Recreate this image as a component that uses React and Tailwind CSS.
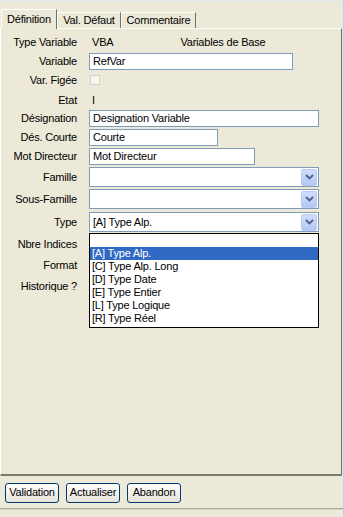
import React from "react";

const Chevron = () => (
  <svg width="9" height="6" viewBox="0 0 9 6">
    <path d="M1 1 L4.5 4.5 L8 1" fill="none" stroke="#4d6185" strokeWidth="1.8" />
  </svg>
);

const Select = ({ value }) => (
  <div className="w-[230px] h-[20px] border border-[#7f9db9] bg-white flex items-center">
    <span className="flex-1 pl-[3px] leading-none">{value}</span>
    <div className="w-[16px] h-[17px] mr-[1px] rounded-[2px] border border-[#bccbf5] bg-gradient-to-b from-[#d0ddfc] to-[#b3c7f6] flex items-center justify-center">
      <Chevron />
    </div>
  </div>
);

const Input = ({ value, w }) => (
  <div className={`${w} h-[17px] border border-[#7f9db9] bg-white flex items-center pl-[3px] leading-none`}>
    {value}
  </div>
);

const Row = ({ label, mt, h, children, extra }) => (
  <div className={`flex items-center ${mt} ${h} relative`}>
    <div className="w-[76px] text-right leading-none whitespace-nowrap">{label}</div>
    <div className="ml-[12px] flex items-center">{children}</div>
    {extra}
  </div>
);

export default function App() {
  const items = [
    "[A] Type Alp.",
    "[C] Type Alp. Long",
    "[D] Type Date",
    "[E] Type Entier",
    "[L] Type Logique",
    "[R] Type Réel",
  ];
  return (
    <div className="w-[344px] h-[517px] bg-[#ece9d8] flex font-['Liberation_Sans',sans-serif] text-[11px] tracking-[-0.2px] text-black overflow-hidden">
      <div className="flex-1 flex flex-col">
        {/* tabs */}
        <div className="h-[28px] flex items-end pl-[1px] border-t border-[#dfe6ef]">
          <div className="relative z-10 w-[56px] h-[20px] mb-[-1px] bg-[#ece9d8] border-t border-l border-white border-r border-r-[#716f64] flex items-center justify-center rounded-tl-[2px]">
            Définition
          </div>
          <div className="w-[64px] h-[16px] bg-[#ece9d8] border-t border-l border-white border-r border-r-[#716f64] flex items-center justify-center">
            Val. Défaut
          </div>
          <div className="w-[75px] h-[16px] bg-[#ece9d8] border-t border-l border-white border-r border-r-[#716f64] flex items-center justify-center">
            Commentaire
          </div>
        </div>
        {/* panel */}
        <div className="w-[342px] h-[448px] border-t border-l border-white border-r border-r-[#716f64] border-b-2 border-b-[#7d7b70] flex flex-col">
          <div className="flex flex-col">
            <Row label="Type Variable" mt="mt-[6px]" h="h-[15px]">
              <span className="ml-[3px] leading-none">VBA</span>
              <span className="ml-[67px] leading-none">Variables de Base</span>
            </Row>
            <Row label="Variable" mt="mt-[3px]" h="h-[17px]">
              <Input value="RefVar" w="w-[204px]" />
            </Row>
            <Row label="Var. Figée" mt="mt-[2px]" h="h-[16px]">
              <div className="ml-[1px] w-[10px] h-[10px] border border-[#d4d2c6] bg-[#f6f5f0]" />
            </Row>
            <Row label="Etat" mt="mt-[4px]" h="h-[16px]">
              <span className="ml-[3px] leading-none">I</span>
            </Row>
            <Row label="Désignation" mt="mt-[2px]" h="h-[17px]">
              <Input value="Designation Variable" w="w-[230px]" />
            </Row>
            <Row label="Dés. Courte" mt="mt-[2px]" h="h-[17px]">
              <Input value="Courte" w="w-[129px]" />
            </Row>
            <Row label="Mot Directeur" mt="mt-[2px]" h="h-[17px]">
              <Input value="Mot Directeur" w="w-[166px]" />
            </Row>
            <Row label="Famille" mt="mt-[2px]" h="h-[20px]">
              <Select value="" />
            </Row>
            <Row label="Sous-Famille" mt="mt-[2px]" h="h-[20px]">
              <Select value="" />
            </Row>
            <Row
              label="Type"
              mt="mt-[3px]"
              h="h-[20px]"
              extra={
                <div className="absolute z-20 left-[88px] top-[21px] w-[230px] h-[95px] border border-black bg-white flex flex-col">
                  <div className="h-[13px]" />
                  {items.map((t, i) => (
                    <div
                      key={t}
                      className={`h-[13px] pl-[2px] flex items-center leading-none ${
                        i === 0 ? "bg-[#316ac5] text-white" : ""
                      }`}
                    >
                      {t}
                    </div>
                  ))}
                </div>
              }
            >
              <Select value="[A] Type Alp." />
            </Row>
            <Row label="Nbre Indices" mt="mt-[4px]" h="h-[16px]" />
            <Row label="Format" mt="mt-[5px]" h="h-[16px]" />
            <Row label="Historique ?" mt="mt-[5px]" h="h-[16px]" />
          </div>
        </div>
        {/* buttons */}
        <div className="h-[32px] flex items-center pl-[5px] gap-[7px] pt-[1px]">
          {["Validation", "Actualiser", "Abandon"].map((b) => (
            <div
              key={b}
              className="w-[54px] h-[20px] rounded-[3px] border border-[#003c74] bg-gradient-to-b from-white to-[#e6e3d6] flex items-center justify-center leading-none"
            >
              {b}
            </div>
          ))}
        </div>
        <div className="h-[2px] border-t border-[#aca899] border-b border-b-[#d8d5c6]" />
      </div>
      <div className="w-px bg-[#c2d2e8]" />
    </div>
  );
}
